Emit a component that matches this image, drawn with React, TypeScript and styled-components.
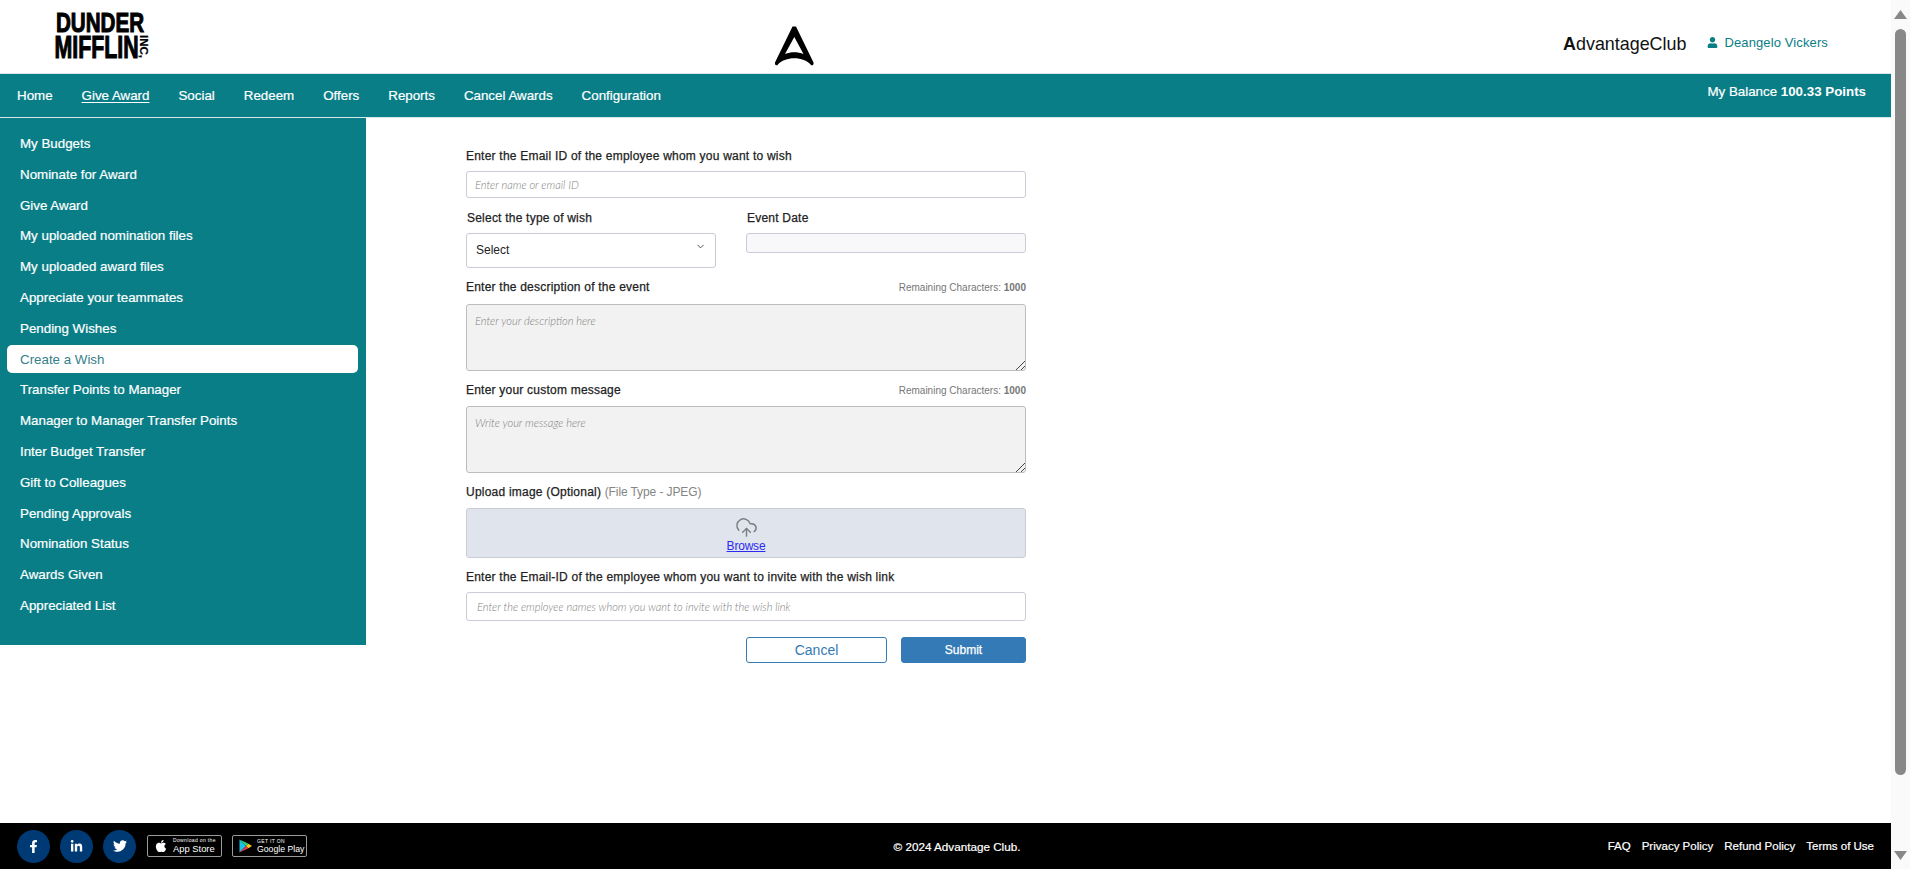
import styled, { createGlobalStyle } from "styled-components";
import { FaApple, FaFacebookF, FaLinkedinIn, FaTwitter, FaUser } from "react-icons/fa";
import { ChevronDown, CloudUpload } from "lucide-react";

const teal = "#0a7e87";

const GlobalStyle = createGlobalStyle`
  html, body { margin: 0; padding: 0; height: 100%; overflow: hidden; background: #fff; }
  body { font-family: "Liberation Sans", Arial, sans-serif; }
  * { box-sizing: border-box; }
`;

const Shell = styled.div`
  display: flex;
  height: 869px;
`;

const Page = styled.div`
  flex: 1;
  min-width: 0;
  display: flex;
  flex-direction: column;
`;

// header
const Header = styled.header`
  height: 73px;
  flex: none;
  display: grid;
  grid-template-columns: 775px 1fr auto;
  align-items: start;
`;

const BrandLogo = styled.svg`
  display: block;
  margin: 6px 0 0 54px;
`;

const CenterLogo = styled.svg`
  display: block;
  margin-top: 25px;
`;

const HeaderRight = styled.div`
  display: flex;
  align-items: center;
  height: 20px;
  margin-top: 33px;
  padding-right: 63px;
`;

const ClubName = styled.span`
  font-size: 17.9px;
  color: #111;
  margin-right: 21px;
  position: relative;
  top: 1px;
  b { font-weight: 700; }
`;

const UserName = styled.span`
  display: flex;
  align-items: center;
  gap: 6px;
  font-size: 13px;
  letter-spacing: 0.12px;
  color: ${teal};
  position: relative;
  top: -1px;
`;

// nav
const Nav = styled.nav`
  height: 45px;
  flex: none;
  background: ${teal};
  border-top: 1px solid #d8e6e8;
  border-bottom: 1px solid #d8e6e8;
  display: flex;
  justify-content: space-between;
  color: #fff;
`;

const NavLinks = styled.div`
  display: flex;
  gap: 29px;
  padding-left: 17px;
  align-items: center;
  height: 43px;
`;

const NavLink = styled.a<{ $active?: boolean }>`
  font-size: 13.33px;
  -webkit-text-stroke: 0.2px #fff;
  text-decoration: ${(p) => (p.$active ? "underline" : "none")};
  text-underline-offset: 2px;
  color: #fff;
`;

const Balance = styled.div`
  font-size: 13.33px;
  padding: 10px 25px 0 0;
  -webkit-text-stroke: 0.2px #fff;
  b { font-weight: 700; -webkit-text-stroke-width: 0; }
`;

// body
const Content = styled.div`
  flex: 1;
  display: flex;
  align-items: flex-start;
  min-height: 0;
`;

const Sidebar = styled.aside`
  width: 366px;
  height: 527px;
  background: ${teal};
  padding: 11.5px 8px 0 7px;
  display: flex;
  flex-direction: column;
`;

const SideItem = styled.a<{ $active?: boolean }>`
  height: 28px;
  flex: none;
  margin-bottom: 2.8px;
  display: flex;
  align-items: center;
  padding-left: 13px;
  font-size: 13.33px;
  border-radius: 5px;
  color: ${(p) => (p.$active ? "#35808a" : "#fff")};
  background: ${(p) => (p.$active ? "#fff" : "transparent")};
  -webkit-text-stroke-width: ${(p) => (p.$active ? "0" : "0.2px")};
`;

const Form = styled.form`
  width: 560px;
  margin-left: 100px;
  padding-top: 30px;
  display: flex;
  flex-direction: column;
`;

const LabelRow = styled.div<{ $gap?: number }>`
  display: flex;
  justify-content: space-between;
  align-items: center;
  height: 16px;
  margin-bottom: ${(p) => p.$gap ?? 8}px;
`;

const Label = styled.label`
  font-size: 12px;
  letter-spacing: 0.22px;
  color: #222;
  -webkit-text-stroke: 0.25px #222;
`;

const Hint = styled.span`
  font-size: 12px;
  letter-spacing: -0.1px;
  font-weight: 400;
  color: #858585;
  -webkit-text-stroke-width: 0;
`;

const Remaining = styled.span`
  font-size: 10px;
  color: #777;
  b { font-weight: 700; }
`;

const fieldPlaceholder = `
  font-family: Lato, "Liberation Sans", sans-serif;
  font-style: italic;
  font-weight: 300;
  font-size: 11.1px;
  color: #808080;
`;

const TextInput = styled.input<{ $indent?: number; $height?: number }>`
  display: block;
  width: 100%;
  height: ${(p) => p.$height ?? 27}px;
  border: 1px solid #c9ccd6;
  border-radius: 3px;
  padding: 0 0 0 ${(p) => p.$indent ?? 8}px;
  outline: none;
  background: #fff;
  &::placeholder { ${fieldPlaceholder} opacity: 1; }
`;

const TwoCol = styled.div`
  display: grid;
  grid-template-columns: 250px 280px;
  gap: 30px;
  margin-top: 12px;
`;

const ColLabel = styled(LabelRow)`
  margin-bottom: 7px;
  padding-left: 1px;
`;

const SelectWrap = styled.div`
  position: relative;
  height: 35px;
  svg { position: absolute; right: 10px; top: 8px; color: #444; }
`;

const Select = styled.select`
  width: 100%;
  height: 100%;
  appearance: none;
  border: 1px solid #c9ccd6;
  border-radius: 3px;
  background: #fff;
  padding: 0 0 2px 9px;
  font: 12px "Liberation Sans", Arial, sans-serif;
  color: #222;
  outline: none;
`;

const DateInput = styled.input`
  display: block;
  width: 100%;
  height: 20px;
  border: 1px solid #c9ccd6;
  border-radius: 3px;
  background: #f8f8fa;
  outline: none;
`;

const Section = styled.div`
  margin-top: 11px;
`;

const TextArea = styled.textarea`
  display: block;
  width: 100%;
  height: 67px;
  border: 1px solid #bdbdbd;
  border-radius: 3px;
  background: #f2f2f2;
  padding: 9px 8px;
  outline: none;
  &::placeholder { ${fieldPlaceholder} opacity: 1; }
  &::-webkit-resizer {
    background: linear-gradient(135deg, transparent 68%, #444 68%, #444 73%, transparent 73%, transparent 84%, #444 84%, #444 89%, transparent 89%);
  }
`;

const Upload = styled.div`
  height: 50px;
  background: #e0e4ec;
  border: 1px solid #c9ccd6;
  border-radius: 3px;
  display: flex;
  flex-direction: column;
  align-items: center;
  padding-top: 7px;
  svg { color: #7b7f85; display: block; }
`;

const Browse = styled.a`
  font-size: 12px;
  letter-spacing: -0.2px;
  color: #2a2af0;
  text-decoration: underline;
`;

const Actions = styled.div`
  display: flex;
  justify-content: flex-end;
  gap: 14px;
  margin-top: 16px;
`;

const CancelButton = styled.button`
  width: 141px;
  height: 26px;
  border: 1px solid #337ab7;
  border-radius: 3px;
  background: #fff;
  color: #337ab7;
  font: 14px "Liberation Sans", Arial, sans-serif;
`;

const SubmitButton = styled.button`
  width: 125px;
  height: 26px;
  border: 1px solid #337ab7;
  border-radius: 3px;
  background: #337ab7;
  color: #fff;
  font: 12px "Liberation Sans", Arial, sans-serif;
  -webkit-text-stroke: 0.25px #fff;
`;

// footer
const Footer = styled.footer`
  height: 46px;
  flex: none;
  background: #000;
  color: #fff;
  display: grid;
  grid-template-columns: 1fr auto 1fr;
  align-items: center;
  padding: 0 17px;
  font-size: 11.5px;
`;

const Socials = styled.div`
  display: flex;
  align-items: center;
`;

const Social = styled.a<{ $gap?: number }>`
  width: 33px;
  height: 33px;
  border-radius: 50%;
  background: #003a75;
  color: #fff;
  display: flex;
  align-items: center;
  justify-content: center;
  margin-right: ${(p) => p.$gap ?? 10}px;
`;

const Badge = styled.a`
  width: 75px;
  height: 22px;
  border: 1px solid #9a9a9a;
  border-radius: 2px;
  display: flex;
  align-items: center;
  margin-right: 10px;
  color: #fff;
  padding-left: 6px;
  gap: 5px;
`;

const BadgeText = styled.span<{ $size: number }>`
  display: flex;
  flex-direction: column;
  line-height: 1;
  small { font-size: 5px; letter-spacing: 0.35px; white-space: nowrap; }
  span { font-size: ${(p) => p.$size}px; margin-top: 1px; white-space: nowrap; }
`;

const Copy = styled.div`
  font-size: 11.7px;
  margin-left: 23px;
  -webkit-text-stroke: 0.2px #fff;
`;

const FooterLinks = styled.div`
  display: flex;
  justify-content: flex-end;
  gap: 11px;
  -webkit-text-stroke: 0.2px #fff;
`;

// scrollbar drawn by hand, headless browser hides the native one
const ScrollTrack = styled.div`
  width: 19px;
  flex: none;
  background: #fafafa;
  position: relative;
`;

const ScrollThumb = styled.div`
  position: absolute;
  left: 4px;
  top: 29px;
  width: 11px;
  height: 746px;
  border-radius: 6px;
  background: #888;
`;

const ScrollArrow = styled.svg<{ $down?: boolean }>`
  position: absolute;
  left: 3px;
  ${(p) => (p.$down ? "bottom: 9px;" : "top: 10px;")}
`;

const sideItems = [
  "My Budgets",
  "Nominate for Award",
  "Give Award",
  "My uploaded nomination files",
  "My uploaded award files",
  "Appreciate your teammates",
  "Pending Wishes",
  "Create a Wish",
  "Transfer Points to Manager",
  "Manager to Manager Transfer Points",
  "Inter Budget Transfer",
  "Gift to Colleagues",
  "Pending Approvals",
  "Nomination Status",
  "Awards Given",
  "Appreciated List",
];

const navItems = ["Home", "Give Award", "Social", "Redeem", "Offers", "Reports", "Cancel Awards", "Configuration"];

function App() {
  return (
    <Shell>
      <GlobalStyle />
      <Page>
        <Header>
          <BrandLogo width="120" height="64" viewBox="0 0 120 64">
            <text transform="translate(2 26) scale(0.735 1)" fontFamily="Liberation Sans" fontWeight="700" fontSize="28" stroke="#000" strokeWidth="1.1">DUNDER</text>
            <text transform="translate(0.5 52) scale(0.667 1)" fontFamily="Liberation Sans" fontWeight="700" fontSize="32" stroke="#000" strokeWidth="1.1">MIFFLIN</text>
            <text transform="translate(85.5 29) rotate(90) scale(1.15 1)" fontFamily="Liberation Sans" fontWeight="700" fontSize="10" stroke="#000" strokeWidth="0.2">INC,</text>
          </BrandLogo>
          <CenterLogo width="42" height="42" viewBox="0 0 42 42">
            <path d="M17.5 1.5 L21 1.5 L38.5 37.5 C39 39.5 37.5 41 36 40 C32 35.5 26 33.3 19.3 33.3 C12.5 33.3 6.5 35.5 2.5 40 C1 41 -0.5 39.5 0 37.5 Z M19.3 12 L10 29 C13 27.8 16 27.2 19.3 27.2 C22.5 27.2 25.5 27.8 28.5 29 Z" fill="#000" fillRule="evenodd" />
          </CenterLogo>
          <HeaderRight>
            <ClubName><b>A</b>dvantageClub</ClubName>
            <UserName>
              <FaUser size={11} />
              Deangelo Vickers
            </UserName>
          </HeaderRight>
        </Header>
        <Nav>
          <NavLinks>
            {navItems.map((item) => (
              <NavLink key={item} $active={item === "Give Award"}>{item}</NavLink>
            ))}
          </NavLinks>
          <Balance>My Balance <b>100.33 Points</b></Balance>
        </Nav>
        <Content>
          <Sidebar>
            {sideItems.map((item) => (
              <SideItem key={item} $active={item === "Create a Wish"}>{item}</SideItem>
            ))}
          </Sidebar>
          <Form>
            <LabelRow $gap={7}>
              <Label>Enter the Email ID of the employee whom you want to wish</Label>
            </LabelRow>
            <TextInput placeholder="Enter name or email ID" />
            <TwoCol>
              <div>
                <ColLabel><Label>Select the type of wish</Label></ColLabel>
                <SelectWrap>
                  <Select defaultValue="">
                    <option value="">Select</option>
                  </Select>
                  <ChevronDown size={11} strokeWidth={2} />
                </SelectWrap>
              </div>
              <div>
                <ColLabel><Label>Event Date</Label></ColLabel>
                <DateInput />
              </div>
            </TwoCol>
            <Section>
              <LabelRow $gap={9}>
                <Label>Enter the description of the event</Label>
                <Remaining>Remaining Characters: <b>1000</b></Remaining>
              </LabelRow>
              <TextArea placeholder="Enter your description here" />
            </Section>
            <Section>
              <LabelRow>
                <Label>Enter your custom message</Label>
                <Remaining>Remaining Characters: <b>1000</b></Remaining>
              </LabelRow>
              <TextArea placeholder="Write your message here" />
            </Section>
            <Section>
              <LabelRow>
                <Label>Upload image (Optional) <Hint>(File Type - JPEG)</Hint></Label>
              </LabelRow>
              <Upload>
                <CloudUpload size={23} strokeWidth={1.5} />
                <Browse>Browse</Browse>
              </Upload>
            </Section>
            <Section>
              <LabelRow $gap={7}>
                <Label>Enter the Email-ID of the employee whom you want to invite with the wish link</Label>
              </LabelRow>
              <TextInput $indent={10} $height={29} placeholder="Enter the employee names whom you want to invite with the wish link" />
            </Section>
            <Actions>
              <CancelButton type="button">Cancel</CancelButton>
              <SubmitButton type="button">Submit</SubmitButton>
            </Actions>
          </Form>
        </Content>
        <Footer>
          <Socials>
            <Social><FaFacebookF size={13} /></Social>
            <Social><FaLinkedinIn size={13} /></Social>
            <Social $gap={11}><FaTwitter size={14} /></Social>
            <Badge>
              <FaApple size={14} />
              <BadgeText $size={9.4}>
                <small>Download on the</small>
                <span>App Store</span>
              </BadgeText>
            </Badge>
            <Badge>
              <svg width="13" height="14" viewBox="0 0 13 14">
                <path d="M0.5 0.5 L7 7 L0.5 13.5 Z" fill="#19c3e6" />
                <path d="M0.5 0.5 L9.5 4.8 L7 7 Z" fill="#35d07f" />
                <path d="M0.5 13.5 L9.5 9.2 L7 7 Z" fill="#e8394a" />
                <path d="M9.5 4.8 L13 7 L9.5 9.2 L7 7 Z" fill="#f8c51c" />
              </svg>
              <BadgeText $size={8.7}>
                <small>GET IT ON</small>
                <span>Google Play</span>
              </BadgeText>
            </Badge>
          </Socials>
          <Copy>© 2024 Advantage Club.</Copy>
          <FooterLinks>
            <span>FAQ</span>
            <span>Privacy Policy</span>
            <span>Refund Policy</span>
            <span>Terms of Use</span>
          </FooterLinks>
        </Footer>
      </Page>
      <ScrollTrack>
        <ScrollArrow width="13" height="9" viewBox="0 0 13 9"><path d="M6.5 0 L13 9 L0 9 Z" fill="#888" /></ScrollArrow>
        <ScrollThumb />
        <ScrollArrow $down width="13" height="9" viewBox="0 0 13 9"><path d="M0 0 L13 0 L6.5 9 Z" fill="#888" /></ScrollArrow>
      </ScrollTrack>
    </Shell>
  );
}

export default App;
